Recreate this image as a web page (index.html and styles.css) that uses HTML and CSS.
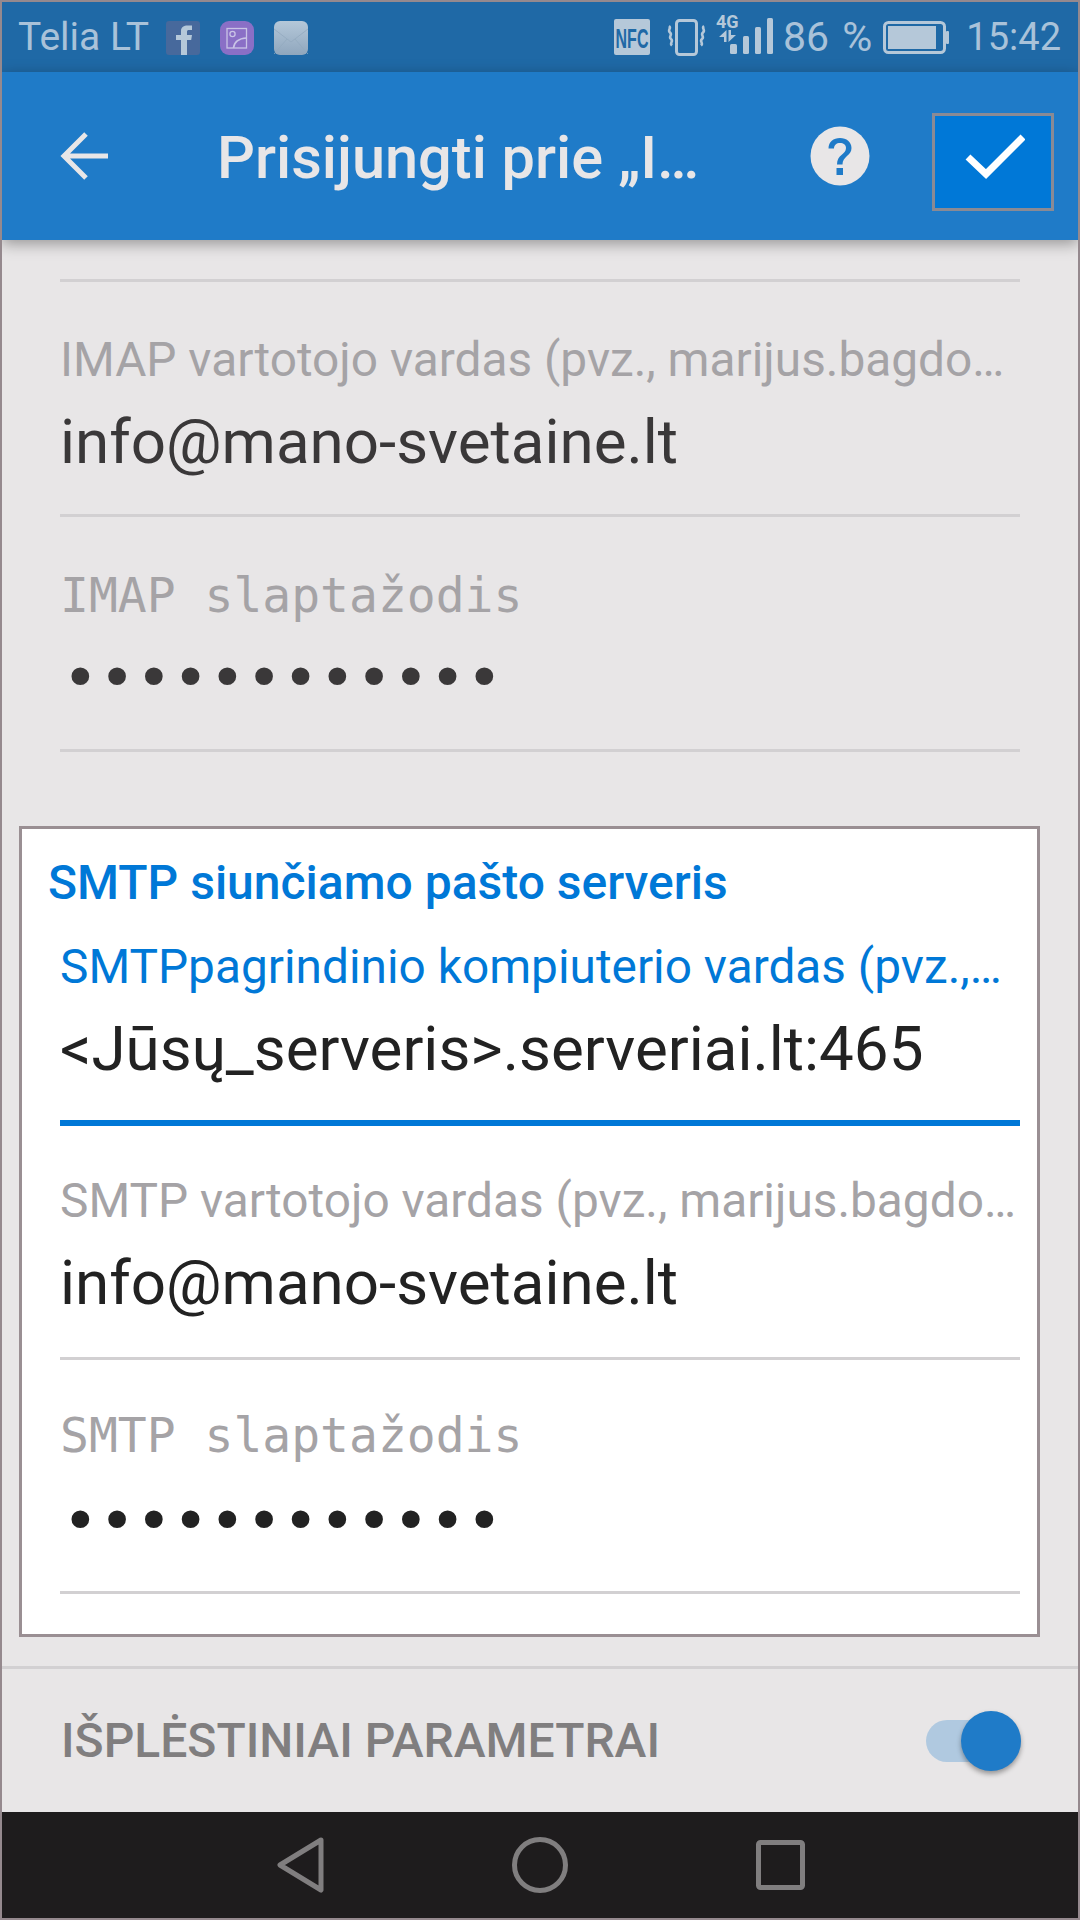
FILE: index.html
```html
<!DOCTYPE html>
<html lang="en">
<head>
   <meta charset="UTF-8">
   <meta name="viewport" content="width=device-width, initial-scale=1.0">
   <title>Prisijungti prie IMAP</title>
   <link rel="stylesheet" href="styles.css">
</head>
<body>
   <div class="phone">
      <div class="status-bar">
         <span class="carrier">Telia LT</span>
         <svg class="notif notif-first" width="34" height="35" viewBox="0 0 34 35">
            <rect width="34" height="34" rx="3" fill="#47699c"/>
            <path d="M15 34V19h-5v-5h5v-4C15 6 18 4.500 21.500 4.500H26V9h-3c-1.500 0-2 .6-2 2v3h5l-.8 5H21v15z" fill="#b5c8d9"/>
         </svg>
         <svg class="notif" width="34" height="35" viewBox="0 0 34 35">
            <rect width="34" height="34" rx="9" fill="#8a6fc6"/>
            <rect x="7" y="7.500" width="19.500" height="19.500" fill="none" stroke="#c9c3e6" stroke-width="1.300"/>
            <circle cx="12.500" cy="13" r="2.600" fill="none" stroke="#c9c3e6" stroke-width="1.300"/>
            <path d="M13.500 27c.6-5.500 5-9.500 13-10" fill="none" stroke="#c9c3e6" stroke-width="1.600"/>
         </svg>
         <svg class="notif" width="34" height="35" viewBox="0 0 34 35">
            <defs>
               <linearGradient id="mailFill" x1="0" y1="0" x2="0" y2="1">
                  <stop offset="0" stop-color="#b5c8d9"/>
                  <stop offset="1" stop-color="#8fa6bd"/>
               </linearGradient>
            </defs>
            <rect width="34" height="34" rx="6" fill="url(#mailFill)"/>
            <path d="M0 8l17 13L34 8M0 33l13-15M34 33L21 18" fill="none" stroke="#93a9bf" stroke-width=".8"/>
         </svg>
         <div class="status-right">
            <svg class="nfc" width="36" height="36" viewBox="0 0 36 36">
               <rect width="36" height="36" rx="2" fill="#b5c8d9"/>
               <text class="nfc-text" x="18" y="17" text-anchor="middle" transform="scale(1 1.700)">NFC</text>
            </svg>
            <svg class="vibrate" width="41" height="37" viewBox="0 0 41 37">
               <rect x="10.500" y="1.500" width="20" height="34" rx="3" fill="none" stroke="#b5c8d9" stroke-width="3"/>
               <path d="M3 7c3 2-2 4 1 6.500s-2 4 1 6.500-2 4 1 6.500M38 7c-3 2 2 4-1 6.500s2 4-1 6.500 2 4-1 6.500" fill="none" stroke="#b5c8d9" stroke-width="2.600"/>
            </svg>
            <svg class="signal" width="58" height="43" viewBox="0 0 58 43">
               <text class="net-text" x="0" y="16">4G</text>
               <path d="M10.500 18v12H8v-5H3zM12.500 30V18H15v5h5z" fill="#b5c8d9"/>
               <rect x="14" y="32" width="7" height="10" rx="1.500" fill="#b5c8d9"/>
               <rect x="27" y="24" width="6" height="18" rx="1.500" fill="#b5c8d9"/>
               <rect x="39" y="15" width="6" height="27" rx="1.500" fill="#b5c8d9"/>
               <rect x="51" y="6" width="6" height="36" rx="1.500" fill="#b5c8d9"/>
            </svg>
            <span class="battery-text">86 %</span>
            <svg class="battery" width="66" height="33" viewBox="0 0 66 33">
               <rect x="1.500" y="1.500" width="60" height="30" rx="4" fill="none" stroke="#b5c8d9" stroke-width="3"/>
               <rect x="5" y="5" width="48" height="23" fill="#b5c8d9"/>
               <rect x="63" y="10" width="3" height="13" rx="1" fill="#b5c8d9"/>
            </svg>
            <span class="clock">15:42</span>
         </div>
      </div>

      <div class="app-bar">
         <svg class="back" width="48" height="50" viewBox="0 0 48 50">
            <path d="M48 25H4M26 3L4 25l22 22" fill="none" stroke="#e8e6e7" stroke-width="5"/>
         </svg>
         <div class="title">Prisijungti prie „I…</div>
         <svg class="help" width="60" height="60" viewBox="0 0 60 60">
            <circle cx="30" cy="30" r="29.500" fill="#e8e6e7"/>
            <path d="M18.500 22.500C18.500 16 23.500 12 30 12s11.500 4 11.500 10c0 8-9 8-9 16.500h-5.500c0-10 9-10 9-16.500 0-3.200-2.600-5-6-5s-6 2-6 5.500zM26.500 42h6.500v7h-6.500z" fill="#1f7bc8"/>
         </svg>
         <div class="done">
            <svg width="60" height="46" viewBox="0 0 60 46">
               <path d="M3 24l18 17L58 4" fill="none" stroke="#fff" stroke-width="7"/>
            </svg>
         </div>
      </div>

      <div class="content">
         <div class="field-edge"></div>

         <div class="field">
            <div class="label">IMAP vartotojo vardas (pvz., marijus.bagdo…</div>
            <div class="value">info@mano-svetaine.lt</div>
         </div>
         <div class="field">
            <div class="label mono">IMAP slaptažodis</div>
            <div class="value dots">••••••••••••</div>
         </div>

         <div class="smtp-card">
            <div class="section-title">SMTP siunčiamo pašto serveris</div>
            <div class="field field-active">
               <div class="label">SMTPpagrindinio kompiuterio vardas (pvz.,…</div>
               <div class="value">&lt;Jūsų_serveris&gt;.serveriai.lt:465</div>
            </div>
            <div class="field">
               <div class="label">SMTP vartotojo vardas (pvz., marijus.bagdo…</div>
               <div class="value">info@mano-svetaine.lt</div>
            </div>
            <div class="field">
               <div class="label mono">SMTP slaptažodis</div>
               <div class="value dots">••••••••••••</div>
            </div>
         </div>
      </div>

      <div class="advanced">
         <span class="advanced-label">IŠPLĖSTINIAI PARAMETRAI</span>
         <div class="toggle"><div class="toggle-knob"></div></div>
      </div>

      <div class="nav-bar">
         <svg width="47" height="56" viewBox="0 0 47 56">
            <path d="M44 3L3 28l41 25z" fill="none" stroke="#807e7f" stroke-width="5" stroke-linejoin="round"/>
         </svg>
         <svg width="56" height="56" viewBox="0 0 56 56">
            <circle cx="28" cy="28" r="25.500" fill="none" stroke="#807e7f" stroke-width="5"/>
         </svg>
         <svg width="49" height="50" viewBox="0 0 49 50">
            <rect x="2.500" y="2.500" width="44" height="45" rx="2" fill="none" stroke="#807e7f" stroke-width="5"/>
         </svg>
      </div>
   </div>
</body>
</html>
```

FILE: styles.css
```css
* {
   box-sizing: border-box;
}
body {
   margin: 0;
   font-family: Roboto, "Noto Sans", sans-serif;
}
.phone {
   width: 1080px;
   height: 1920px;
   display: flex;
   flex-direction: column;
   background: #e8e6e7;
   border: 2px solid #95898e;
   overflow: hidden;
}

/* status bar */
.status-bar {
   height: 70px;
   flex-shrink: 0;
   display: flex;
   align-items: center;
   padding-left: 16px;
   background: #1f69a6;
   color: #a9c2d9;
   font-size: 38px;
}
.carrier {
   font-size: 39px;
}
.notif {
   margin-left: 20px;
   margin-top: 2px;
}
.notif-first {
   margin-left: 17px;
}
.status-right {
   margin-left: auto;
   display: flex;
   align-items: center;
   padding-right: 17px;
}
.nfc-text {
   font-family: "Liberation Sans", sans-serif;
   font-size: 16px;
   font-weight: 700;
   fill: #1f69a6;
}
.net-text {
   font-family: Roboto, sans-serif;
   font-size: 18px;
   font-weight: 700;
   fill: #b5c8d9;
}
.vibrate {
   margin-left: 16px;
}
.signal {
   margin-left: 9px;
   margin-bottom: 7px;
}
.battery-text {
   margin-left: 9px;
   font-size: 41px;
   word-spacing: 3px;
}
.battery {
   margin-left: 11px;
}
.clock {
   margin-left: 17px;
}

/* app bar */
.app-bar {
   height: 168px;
   flex-shrink: 0;
   display: flex;
   align-items: center;
   padding-left: 58px;
   background: #1f7bc8;
   box-shadow: 0 4px 14px rgba(0, 0, 0, 0.35);
   position: relative;
}
.title {
   margin-left: 109px;
   padding-top: 3px;
   width: 593px;
   font-size: 59.500px;
   font-weight: 500;
   color: #e8e6e7;
   white-space: nowrap;
}
.done {
   margin-left: 62px;
   margin-top: 12px;
   width: 122px;
   height: 98px;
   padding: 0 0 12px 4px;
   display: flex;
   align-items: center;
   justify-content: center;
   background: #0078d7;
   border: 3px solid #8a8a94;
}

/* form */
.content {
   flex: 1;
   overflow: hidden;
}
.field-edge {
   height: 3px;
   margin: 39px 58px 0;
   background: #d2d0d2;
}
.field {
   height: 235px;
   margin: 0 58px;
   padding-top: 42px;
   border-bottom: 3px solid #d2d0d2;
}
.label {
   height: 72px;
   line-height: 72px;
   font-size: 47.800px;
   color: #a5a3a6;
   white-space: nowrap;
}
.mono {
   font-family: "DejaVu Sans Mono", monospace;
   font-size: 48px;
}
.value {
   height: 92px;
   line-height: 92px;
   font-size: 61.900px;
   color: #3a3839;
   white-space: nowrap;
}
.dots {
   font-family: "DejaVu Sans Mono", monospace;
   font-size: 61px;
   padding: 1px 0 0 2px;
}
.smtp-card {
   height: 811px;
   margin: 74px 38px 0 17px;
   background: #fff;
   border: 3px solid #9a8f93;
}
.section-title {
   margin: 24px 0 0 26px;
   height: 60px;
   line-height: 60px;
   font-size: 48px;
   font-weight: 500;
   color: #0078d7;
}
.smtp-card .field {
   margin: 0 17px 0 38px;
   height: 234px;
   padding-top: 39px;
}
.smtp-card .value {
   color: #222;
}
.smtp-card .dots {
   padding-top: 4px;
}
.smtp-card .field-active {
   height: 213px;
   padding-top: 18px;
   border-bottom: 6px solid #0078d7;
}
.field-active .label {
   color: #0078d7;
}

/* bottom */
.advanced {
   height: 146px;
   flex-shrink: 0;
   display: flex;
   align-items: center;
   justify-content: space-between;
   padding: 0 57px 0 59px;
   border-top: 3px solid #d2d0d2;
}
.advanced-label {
   font-size: 48px;
   font-weight: 500;
   color: #807e7f;
}
.toggle {
   width: 95px;
   height: 42px;
   border-radius: 21px;
   background: #b0c9e0;
   position: relative;
}
.toggle-knob {
   position: absolute;
   right: 0;
   top: -9px;
   width: 60px;
   height: 60px;
   border-radius: 50%;
   background: #1f7bc8;
   box-shadow: 0 3px 5px rgba(0, 0, 0, 0.35);
}
.nav-bar {
   height: 106px;
   flex-shrink: 0;
   display: flex;
   align-items: center;
   background: #1e1c1d;
   padding-left: 275px;
   gap: 188px;
}
```
